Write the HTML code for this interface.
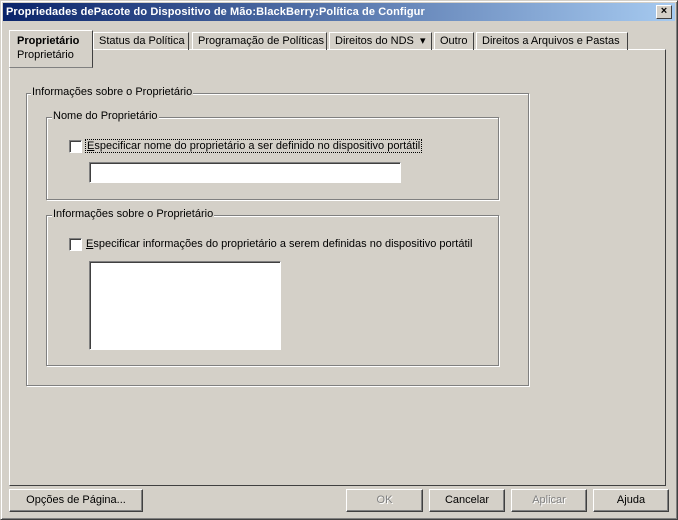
<!DOCTYPE html>
<html><head><style>
*{margin:0;padding:0;box-sizing:border-box}
body{width:678px;height:520px;background:#d4d0c8;font-family:"Liberation Sans",sans-serif;font-size:11px;color:#000;position:relative;overflow:hidden}
.a{position:absolute}
.win{left:0;top:0;width:678px;height:520px;border:1px solid;border-color:#d4d0c8 #404040 #404040 #d4d0c8;box-shadow:inset 1px 1px 0 #fff,inset -1px -1px 0 #808080}
.title{left:3px;top:3px;width:672px;height:18px;background:linear-gradient(90deg,#0a246a,#a6caf0);color:#fff;font-weight:bold;font-size:11px;line-height:18px;padding-left:3px;letter-spacing:0.1px}
.close{left:656px;top:5px;width:16px;height:14px;background:#d4d0c8;border:1px solid;border-color:#fff #404040 #404040 #fff;font-size:11px;line-height:11px;text-align:center;color:#000;font-weight:bold}
.tab{top:32px;height:18px;border:1px solid;border-color:#fff #404040 transparent #fff;border-bottom:none;line-height:16px;padding-left:5px;white-space:nowrap}
.panel{left:9px;top:49px;width:657px;height:437px;border:1px solid;border-color:#fff #404040 #404040 #fff}
.grp{border:1px solid #808080;box-shadow:1px 1px 0 #fff,inset 1px 1px 0 #fff}
.lbl{background:#d4d0c8;padding:0 1px;white-space:nowrap}
.cb{width:13px;height:13px;background:#fff;border:1px solid;border-color:#808080 #fff #fff #808080;box-shadow:inset 1px 1px 0 #404040}
.tb{background:#fff;border:1px solid;border-color:#808080 #fff #fff #808080;box-shadow:inset 1px 1px 0 #404040}
.btn{top:489px;height:23px;border:1px solid;border-color:#fff #404040 #404040 #fff;box-shadow:inset -1px -1px 0 #808080;text-align:center;line-height:21px}
.dis{color:#808080;text-shadow:1px 1px 0 #fff}
</style></head><body>
<div class="a win"></div>
<div class="a title">Propriedades dePacote do Dispositivo de Mão:BlackBerry:Política de Configur</div>
<div class="a close">×</div>
<div class="a panel"></div>
<div class="a tab" style="left:93px;width:96px">Status da Política</div>
<div class="a tab" style="left:192px;width:135px">Programação de Políticas</div>
<div class="a tab" style="left:329px;width:103px">Direitos do NDS &nbsp;▾</div>
<div class="a tab" style="left:434px;width:40px">Outro</div>
<div class="a tab" style="left:476px;width:152px">Direitos a Arquivos e Pastas</div>
<div class="a" style="left:9px;top:30px;width:84px;height:38px;background:#d4d0c8;border:1px solid;border-color:#fff #404040 #404040 #fff;border-bottom:1px solid #808080;padding:3px 0 0 7px;line-height:14px"><b>Proprietário</b><br>Proprietário</div>

<div class="a grp" style="left:26px;top:93px;width:503px;height:293px"></div>
<div class="a lbl" style="left:31px;top:86px">Informações sobre o Proprietário</div>

<div class="a grp" style="left:46px;top:117px;width:453px;height:83px"></div>
<div class="a lbl" style="left:52px;top:110px">Nome do Proprietário</div>
<div class="a cb" style="left:69px;top:140px"></div>
<div class="a" style="left:85px;top:139px;border:1px dotted #000;padding:0 1px;white-space:nowrap"><u>E</u>specificar nome do proprietário a ser definido no dispositivo portátil</div>
<div class="a tb" style="left:89px;top:162px;width:312px;height:21px"></div>

<div class="a grp" style="left:46px;top:215px;width:453px;height:151px"></div>
<div class="a lbl" style="left:52px;top:208px">Informações sobre o Proprietário</div>
<div class="a cb" style="left:69px;top:238px"></div>
<div class="a" style="left:86px;top:238px;white-space:nowrap"><u>E</u>specificar informações do proprietário a serem definidas no dispositivo portátil</div>
<div class="a tb" style="left:89px;top:261px;width:192px;height:89px"></div>

<div class="a btn" style="left:9px;width:134px">Opções de Página...</div>
<div class="a btn dis" style="left:346px;width:77px">OK</div>
<div class="a btn" style="left:429px;width:76px">Cancelar</div>
<div class="a btn dis" style="left:511px;width:76px">Aplicar</div>
<div class="a btn" style="left:593px;width:76px">Ajuda</div>
</body></html>
